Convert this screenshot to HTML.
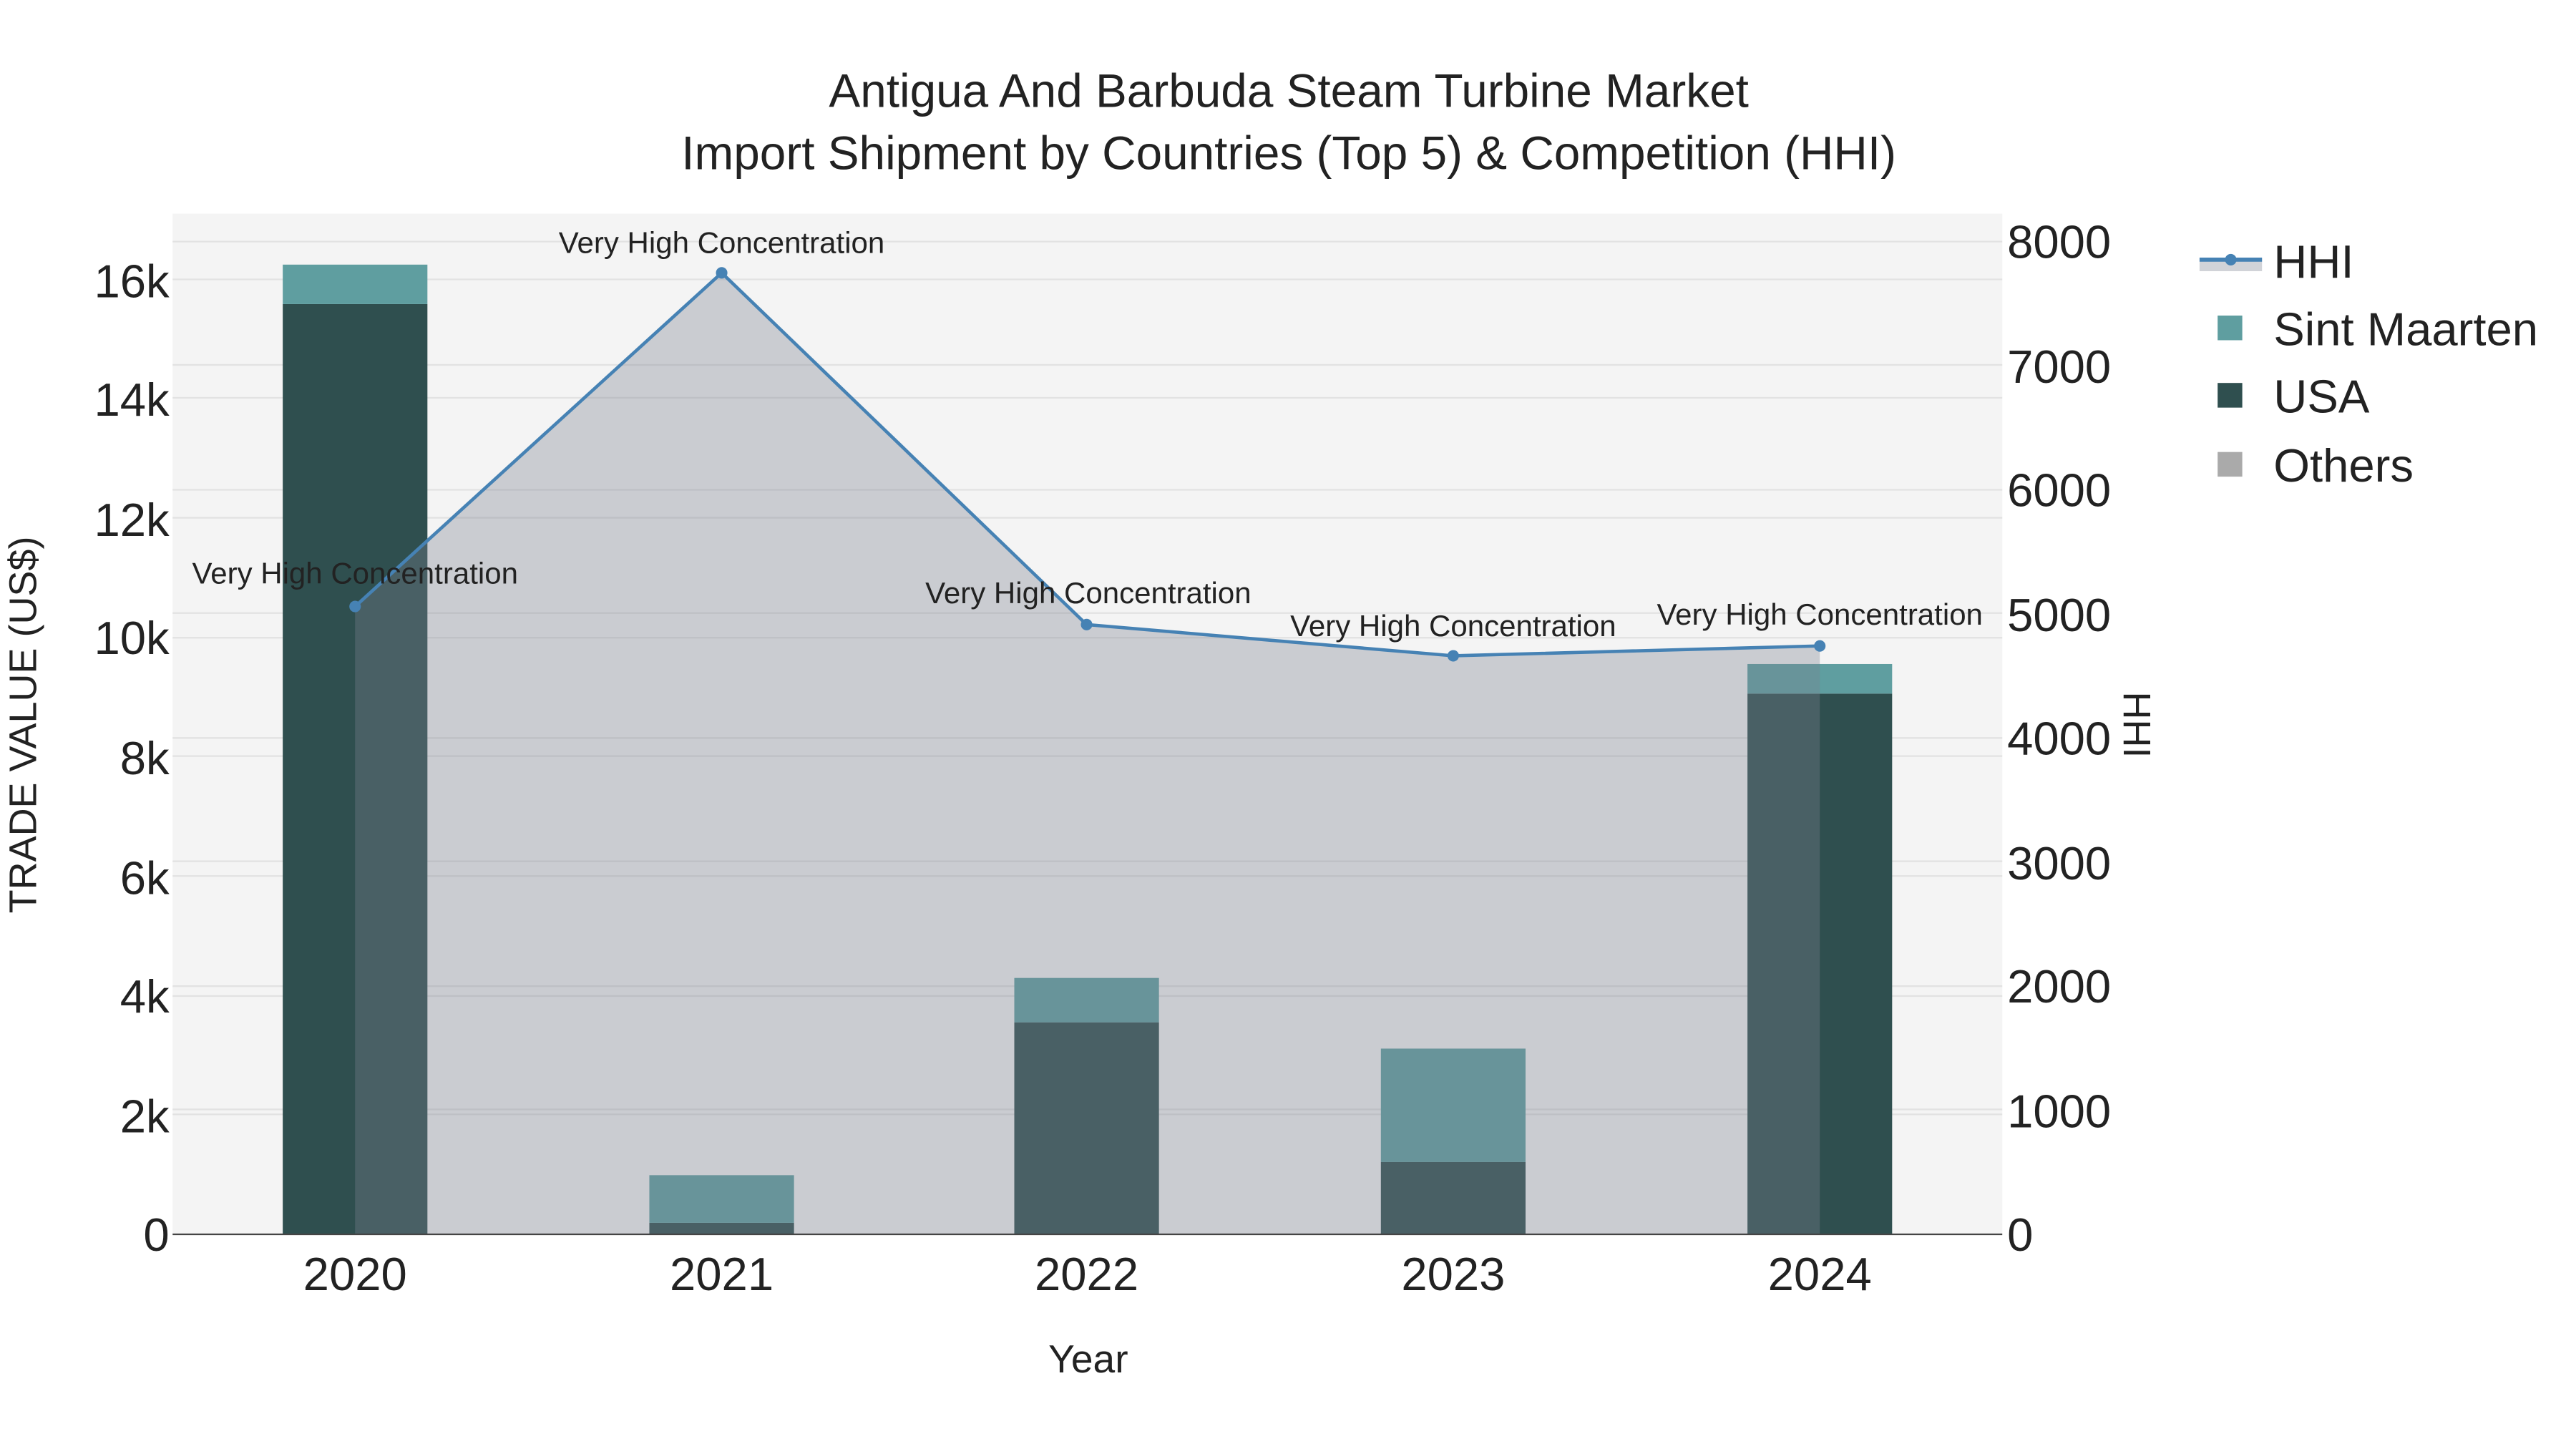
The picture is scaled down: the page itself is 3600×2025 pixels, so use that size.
<!DOCTYPE html>
<html><head><meta charset="utf-8"><style>
html,body{margin:0;padding:0;background:#fff;}
svg{display:block;}
text{font-family:"Liberation Sans",sans-serif;fill:#222;}
</style></head><body>
<svg width="3600" height="2025" viewBox="0 0 1567 881.6" preserveAspectRatio="none" xmlns="http://www.w3.org/2000/svg">
<rect x="0" y="0" width="1567" height="882" fill="#fff"/>
<rect x="105" y="130" width="1113" height="621" fill="#f4f4f4"/>
<g stroke="#e2e2e2" stroke-width="1">
<line x1="105" x2="1218" y1="170" y2="170"/><line x1="105" x2="1218" y1="242" y2="242"/>
<line x1="105" x2="1218" y1="315" y2="315"/><line x1="105" x2="1218" y1="388" y2="388"/>
<line x1="105" x2="1218" y1="460" y2="460"/><line x1="105" x2="1218" y1="533" y2="533"/>
<line x1="105" x2="1218" y1="606" y2="606"/><line x1="105" x2="1218" y1="678" y2="678"/>
<line x1="105" x2="1218" y1="147" y2="147"/><line x1="105" x2="1218" y1="222" y2="222"/>
<line x1="105" x2="1218" y1="298" y2="298"/><line x1="105" x2="1218" y1="373" y2="373"/>
<line x1="105" x2="1218" y1="449" y2="449"/><line x1="105" x2="1218" y1="524" y2="524"/>
<line x1="105" x2="1218" y1="600" y2="600"/><line x1="105" x2="1218" y1="675" y2="675"/>
</g>
<g>
<rect x="172" y="185" width="88" height="566" fill="#2f4f4f"/><rect x="172" y="161" width="88" height="24" fill="#5f9ea0"/>
<rect x="395" y="744" width="88" height="7" fill="#2f4f4f"/><rect x="395" y="715" width="88" height="29" fill="#5f9ea0"/>
<rect x="617" y="622" width="88" height="129" fill="#2f4f4f"/><rect x="617" y="595" width="88" height="27" fill="#5f9ea0"/>
<rect x="840" y="707" width="88" height="44" fill="#2f4f4f"/><rect x="840" y="638" width="88" height="69" fill="#5f9ea0"/>
<rect x="1063" y="422" width="88" height="329" fill="#2f4f4f"/><rect x="1063" y="404" width="88" height="18" fill="#5f9ea0"/>
</g>
<polygon points="216,751 216,369 439,166 661,380 884,399 1107,393 1107,751" fill="rgb(122,128,142)" fill-opacity="0.35"/>
<polyline points="216,369 439,166 661,380 884,399 1107,393" fill="none" stroke="#4682b4" stroke-width="2"/>
<g fill="#4682b4"><circle cx="216" cy="369" r="3.5"/><circle cx="439" cy="166" r="3.5"/><circle cx="661" cy="380" r="3.5"/><circle cx="884" cy="399" r="3.5"/><circle cx="1107" cy="393" r="3.5"/></g>
<line x1="105" x2="1218" y1="751" y2="751" stroke="#444" stroke-width="1"/>
<g font-size="18.3" text-anchor="middle">
<text x="216" y="355">Very High Concentration</text>
<text x="439" y="154">Very High Concentration</text>
<text x="662" y="367">Very High Concentration</text>
<text x="884" y="387">Very High Concentration</text>
<text x="1107" y="380">Very High Concentration</text>
</g>
<g font-size="28.6" text-anchor="middle">
<text x="784" y="65">Antigua And Barbuda Steam Turbine Market</text>
<text x="784" y="103">Import Shipment by Countries (Top 5) &amp; Competition (HHI)</text>
</g>
<g font-size="28.4" text-anchor="end">
<text x="103" y="761">0</text><text x="103" y="689">2k</text><text x="103" y="616">4k</text>
<text x="103" y="544">6k</text><text x="103" y="471">8k</text><text x="103" y="398">10k</text>
<text x="103" y="326">12k</text><text x="103" y="253">14k</text><text x="103" y="181">16k</text>
</g>
<g font-size="28.4">
<text x="1221" y="761">0</text><text x="1221" y="686">1000</text><text x="1221" y="610">2000</text>
<text x="1221" y="535">3000</text><text x="1221" y="459">4000</text><text x="1221" y="384">5000</text>
<text x="1221" y="308">6000</text><text x="1221" y="233">7000</text><text x="1221" y="157">8000</text>
</g>
<g font-size="28.4" text-anchor="middle">
<text x="216" y="785">2020</text><text x="439" y="785">2021</text><text x="661" y="785">2022</text>
<text x="884" y="785">2023</text><text x="1107" y="785">2024</text>
</g>
<text x="662" y="835" font-size="24" text-anchor="middle">Year</text>
<text transform="translate(22,441) rotate(-90)" font-size="23.5" text-anchor="middle">TRADE VALUE (US$)</text>
<text transform="translate(1292,441) rotate(90)" font-size="23.5" text-anchor="middle">HHI</text>
<rect x="1338" y="157" width="38" height="8" fill="rgb(122,128,142)" fill-opacity="0.35"/>
<line x1="1338" x2="1376" y1="158" y2="158" stroke="#4682b4" stroke-width="2.5"/>
<circle cx="1357" cy="158" r="3.5" fill="#4682b4"/>
<rect x="1349" y="192" width="15" height="15" fill="#5f9ea0"/>
<rect x="1349" y="233" width="15" height="15" fill="#2f4f4f"/>
<rect x="1349" y="275" width="15" height="15" fill="#aaaaaa"/>
<g font-size="28.4">
<text x="1383" y="169">HHI</text><text x="1383" y="210">Sint Maarten</text>
<text x="1383" y="251">USA</text><text x="1383" y="293">Others</text>
</g>
</svg>
</body></html>
